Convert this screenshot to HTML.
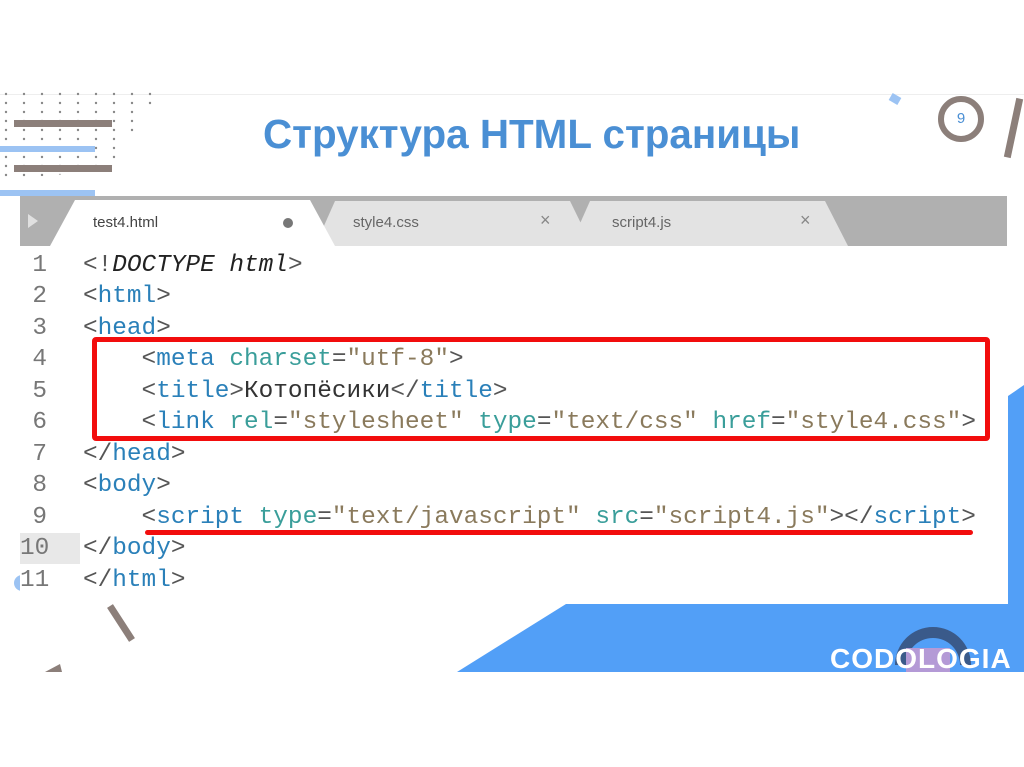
<!DOCTYPE html>
<html><head><meta charset="utf-8"><style>
body{margin:0;width:1024px;height:767px;background:#fff;position:relative;overflow:hidden;font-family:"Liberation Sans",sans-serif}
.abs{position:absolute}
.code{position:absolute;left:20px;top:246px;width:987px;height:358px;background:#fff;font-family:"Liberation Mono",monospace;font-size:24.4px}
.ln{position:absolute;left:0;width:27px;text-align:right;color:#777}
.tx{position:absolute;left:63px;white-space:pre;color:#555}
.t{color:#2a80b9}.a{color:#3a9e9a}.s{color:#8a7a5c}.d{color:#222;font-style:italic}
</style></head><body>
<div class="abs" style="left:0;top:94px;width:1024px;height:1px;background:#eee"></div>
<svg class="abs" style="left:0;top:90px" width="180" height="110">
<defs><pattern id="p" width="18" height="9" patternUnits="userSpaceOnUse"><circle cx="6" cy="4" r="1.2" fill="#888"/></pattern></defs>
<polygon points="0,0 160,0 110,80 0,90" fill="url(#p)"/>
<rect x="14" y="30" width="98" height="7" fill="#8c7f7a"/>
<rect x="0" y="56" width="95" height="6" fill="#9cc3f3"/>
<rect x="14" y="75" width="98" height="7" fill="#8c7f7a"/>
<rect x="0" y="100" width="95" height="6" fill="#9cc3f3"/>
</svg>
<div class="abs" style="left:263px;top:111px;font-size:40.4px;font-weight:bold;color:#4a8fd4;white-space:nowrap">Структура HTML страницы</div>
<div class="abs" style="left:938px;top:96px;width:34px;height:34px;border:6px solid #8c7f7a;border-radius:50%;text-align:center;line-height:34px;font-size:15px;color:#4a8fd4">9</div>
<div class="abs" style="left:1010px;top:98px;width:7px;height:60px;background:#8c7f7a;transform:rotate(12deg)"></div>
<div class="abs" style="left:890px;top:95px;width:10px;height:8px;background:#9cc3f3;transform:rotate(30deg)"></div>
<svg class="abs" style="left:0;top:0" width="1024" height="767">
<polygon points="457,672 566,604 1024,604 1024,672" fill="#529ff7"/>
<polygon points="1008,396 1024,385 1024,604 1008,604" fill="#529ff7"/>
<line x1="110" y1="606" x2="132" y2="640" stroke="#8c7f7a" stroke-width="7"/>
<polygon points="45,672 60,664 62,672" fill="#8c7f7a"/>
<circle cx="22" cy="583" r="8" fill="#9cc3f3"/>
<path d="M895,665 A38,38 0 0 1 971,665 L960,665 A27,27 0 0 0 906,665Z" fill="#3a5a8a"/>
<rect x="906" y="648" width="44" height="24" fill="#b49ad6"/>
</svg>
<div class="abs" style="left:830px;top:643px;font-size:28px;font-weight:bold;color:#fff;letter-spacing:1px">CODOLOGIA</div>
<div class="abs" style="left:20px;top:196px;width:987px;height:50px;background:#b0b0b0"></div>
<div class="abs" style="left:28px;top:214px;width:0;height:0;border-left:10px solid #e0e0e0;border-top:7px solid transparent;border-bottom:7px solid transparent"></div>
<svg class="abs" style="left:0;top:196px" width="1024" height="51">
<polygon points="570,50 590,5 825,5 848,50" fill="#e3e3e3"/>
<polygon points="315,50 335,5 570,5 592,50" fill="#e3e3e3"/>
<polygon points="50,50 75,4 310,4 335,50" fill="#fff"/>
</svg>
<div class="abs" style="left:93px;top:214px;font-size:15px;color:#444">test4.html</div>
<div class="abs" style="left:283px;top:218px;width:10px;height:10px;border-radius:50%;background:#777"></div>
<div class="abs" style="left:353px;top:214px;font-size:15px;color:#666">style4.css</div>
<div class="abs" style="left:540px;top:210px;font-size:18px;color:#888">×</div>
<div class="abs" style="left:612px;top:214px;font-size:15px;color:#666">script4.js</div>
<div class="abs" style="left:800px;top:210px;font-size:18px;color:#888">×</div>
<div class="code">
<div class="abs" style="left:0;top:287px;width:60px;height:31px;background:#e8e8e8"></div>
<div class="ln" style="top:6px">1</div><div class="tx" style="top:6px">&lt;!<span class="d">DOCTYPE html</span>&gt;</div>
<div class="ln" style="top:37px">2</div><div class="tx" style="top:37px">&lt;<span class="t">html</span>&gt;</div>
<div class="ln" style="top:69px">3</div><div class="tx" style="top:69px">&lt;<span class="t">head</span>&gt;</div>
<div class="ln" style="top:100px">4</div><div class="tx" style="top:100px">    &lt;<span class="t">meta</span> <span class="a">charset</span>=<span class="s">"utf-8"</span>&gt;</div>
<div class="ln" style="top:132px">5</div><div class="tx" style="top:132px">    &lt;<span class="t">title</span>&gt;<span style="color:#333">Котопёсики</span>&lt;/<span class="t">title</span>&gt;</div>
<div class="ln" style="top:163px">6</div><div class="tx" style="top:163px">    &lt;<span class="t">link</span> <span class="a">rel</span>=<span class="s">"stylesheet"</span> <span class="a">type</span>=<span class="s">"text/css"</span> <span class="a">href</span>=<span class="s">"style4.css"</span>&gt;</div>
<div class="ln" style="top:195px">7</div><div class="tx" style="top:195px">&lt;/<span class="t">head</span>&gt;</div>
<div class="ln" style="top:226px">8</div><div class="tx" style="top:226px">&lt;<span class="t">body</span>&gt;</div>
<div class="ln" style="top:258px">9</div><div class="tx" style="top:258px">    &lt;<span class="t">script</span> <span class="a">type</span>=<span class="s">"text/javascript"</span> <span class="a">src</span>=<span class="s">"script4.js"</span>&gt;&lt;/<span class="t">script</span>&gt;</div>
<div class="ln" style="top:289px">10</div><div class="tx" style="top:289px">&lt;/<span class="t">body</span>&gt;</div>
<div class="ln" style="top:321px">11</div><div class="tx" style="top:321px">&lt;/<span class="t">html</span>&gt;</div>
</div>
<div class="abs" style="left:92px;top:337px;width:888px;height:94px;border:5px solid #f20d0d;border-radius:4px"></div>
<div class="abs" style="left:145px;top:530px;width:828px;height:5px;background:#f20d0d;border-radius:3px"></div>
</body></html>
